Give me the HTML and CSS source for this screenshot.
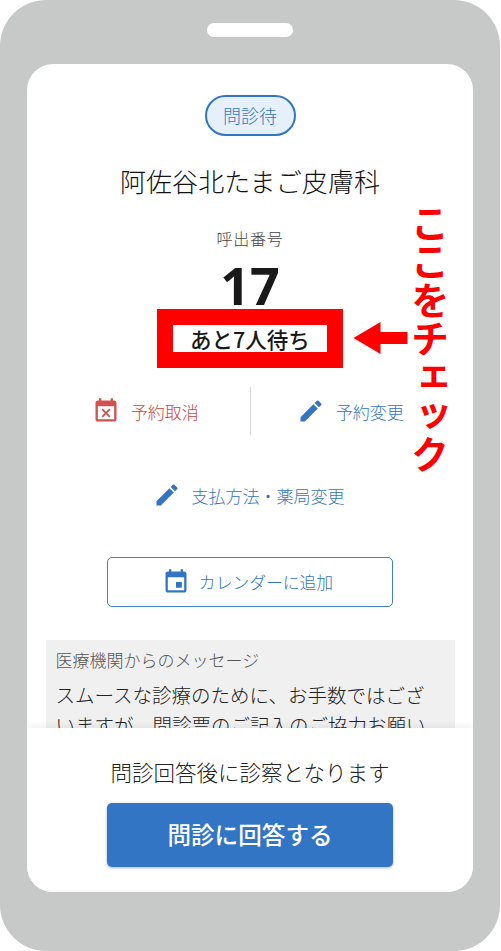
FILE: index.html
```html
<!DOCTYPE html>
<html lang="ja">
<head>
<meta charset="utf-8">
<title>呼出番号</title>
<link rel="stylesheet" href="styles.css">
</head>
<body>
<div class="phone">
  <div class="speaker"></div>
  <main class="screen">
    <div class="content">
      <span class="chip">問診待</span>
      <h1 class="clinic">阿佐谷北たまご皮膚科</h1>
      <p class="num-label">呼出番号</p>
      <p class="num">17</p>
      <div class="actions">
        <a class="action cancel">
          <svg class="icon" viewBox="0 0 24 24"><path d="M19 3h-1V1h-2v2H8V1H6v2H5C3.9 3 3 3.9 3 5v14c0 1.1.9 2 2 2h14c1.1 0 2-.9 2-2V5c0-1.100-.9-2-2-2zm0 16H5V8h14v11zM9.300 17.500l2.700-2.700 2.700 2.700 1.100-1.100-2.700-2.700 2.700-2.700-1.100-1.100-2.700 2.700-2.700-2.700-1.100 1.100 2.700 2.700-2.700 2.700z"/></svg>
          予約取消
        </a>
        <div class="divider"></div>
        <a class="action change">
          <svg class="icon" viewBox="0 0 24 24"><path d="M3 17.250V21h3.750L17.810 9.940l-3.750-3.750L3 17.250zM20.710 7.040a1 1 0 0 0 0-1.410l-2.340-2.340a1 1 0 0 0-1.410 0l-1.830 1.830 3.750 3.750 1.830-1.830z"/></svg>
          予約変更
        </a>
      </div>
      <a class="action pay">
        <svg class="icon" viewBox="0 0 24 24"><path d="M3 17.250V21h3.750L17.810 9.940l-3.750-3.750L3 17.250zM20.710 7.040a1 1 0 0 0 0-1.410l-2.340-2.340a1 1 0 0 0-1.410 0l-1.830 1.830 3.750 3.750 1.830-1.830z"/></svg>
        支払方法・薬局変更
      </a>
      <a class="calendar">
        <svg class="icon" viewBox="0 0 24 24"><path d="M17 12h-5v5h5v-5zM16 1v2H8V1H6v2H5c-1.100 0-2 .9-2 2v14c0 1.100.9 2 2 2h14c1.100 0 2-.9 2-2V5c0-1.100-.9-2-2-2h-1V1h-2zm3 18H5V8h14v11z"/></svg>
        カレンダーに追加
      </a>
      <section class="message">
        <h2 class="message-title">医療機関からのメッセージ</h2>
        <p class="message-body">スムースな診療のために、お手数ではございますが、問診票のご記入のご協力お願いいたします。</p>
      </section>
    </div>
    <footer class="footer">
      <p class="footer-note">問診回答後に診察となります</p>
      <button class="answer" type="button">問診に回答する</button>
    </footer>
  </main>
  <div class="wait-box"><span class="wait-text">あと7人待ち</span></div>
  <svg class="arrow" viewBox="0 0 54 32"><path d="M0 16 27 0v10h27v12H27v10z"/></svg>
  <div class="callout">ここをチェック</div>
</div>
</body>
</html>
```
FILE: styles.css
```css
* { box-sizing: border-box; }
html, body { margin: 0; padding: 0; background: #fff; }
body { font-family: "Noto Sans CJK JP", "Noto Sans", sans-serif; font-weight: 300; }
.phone {
  position: relative;
  width: 500px;
  height: 951px;
  background: #c7c9c8;
  border-radius: 46px;
  padding: 23px 27px 59px;
  display: flex;
  flex-direction: column;
  align-items: center;
}
.speaker { width: 86px; height: 14px; background: #fff; border-radius: 7px; flex: none; }
.screen {
  margin-top: 27px;
  width: 446px;
  flex: 1;
  min-height: 0;
  background: #fff;
  border-radius: 26px;
  overflow: hidden;
  display: flex;
  flex-direction: column;
}
.content {
  flex: 1;
  min-height: 0;
  overflow: hidden;
  display: flex;
  flex-direction: column;
  align-items: center;
  padding-top: 31px;
}
.chip {
  width: 91px;
  height: 41px;
  border: 2px solid #3375c5;
  border-radius: 21px;
  background: #e6f0fa;
  color: #3375c5;
  font-size: 18px;
  line-height: 37px;
  text-align: center;
}
.clinic {
  margin: 25px 0 0;
  font-size: 26px;
  line-height: 40px;
  font-weight: 300;
  letter-spacing: 0.1px;
  color: #111;
}
.num-label { margin: 26px 0 0; font-size: 16px; line-height: 22px; color: #444; letter-spacing: 0.8px; }
.num { margin: 3px 0 0; font-size: 52px; line-height: 66px; font-weight: 700; color: #191919; font-family: "Noto Sans", sans-serif; }
.actions {
  margin-top: 69px;
  width: 100%;
  display: grid;
  grid-template-columns: 1fr 1px 1fr;
  align-items: center;
  height: 48px;
}
.divider { width: 1px; height: 48px; background: #d5d5d5; }
.action { display: flex; align-items: center; justify-content: center; gap: 11px; font-size: 17px; }
.icon { width: 28px; height: 28px; fill: currentColor; flex: none; }
.cancel { color: #d0423e; padding-left: 14px; }
.cancel .icon { color: #d0524e; }
.change { color: #3375c5; padding-right: 23px; }
.change .icon, .pay .icon, .calendar .icon { color: #3375c5; }
.pay { margin-top: 46px; height: 30px; color: #3375c5; gap: 11px; padding-right: 3px; }
.calendar {
  margin-top: 48px;
  width: 286px;
  height: 50px;
  flex: none;
  border: 1px solid #3f80cc;
  border-radius: 5px;
  color: #3375c5;
  font-size: 16.800px;
  display: flex;
  align-items: center;
  justify-content: center;
  gap: 9px;
  padding-right: 5px;
}
.message {
  margin-top: 33px;
  width: 409px;
  flex: none;
  background: #f0f0f0;
  padding: 8px 20px 10px 10px;
}
.message-title { margin: 0; font-size: 17px; line-height: 24px; font-weight: 300; color: #555; }
.message-body { margin: 8px 0 0; font-size: 19.500px; line-height: 30px; color: #222; }
.footer {
  flex: none;
  height: 164px;
  background: #fff;
  box-shadow: 0 -3px 6px rgba(0, 0, 0, 0.05);
  position: relative;
  display: flex;
  flex-direction: column;
  align-items: center;
  padding-top: 28px;
}
.footer-note { margin: 0; font-size: 21.500px; line-height: 32px; color: #222; }
.answer {
  margin-top: 15px;
  width: 286px;
  height: 64px;
  border: 0;
  border-radius: 5px;
  background: #3375c5;
  color: #fff;
  font-family: inherit;
  font-size: 23.600px;
  font-weight: 500;
  line-height: 60px;
  padding: 0 0 2px;
  box-shadow: 0 1px 3px rgba(0, 0, 0, 0.3);
}
.wait-box {
  position: absolute;
  left: 157px;
  top: 309px;
  width: 186px;
  height: 59px;
  border: 16px solid #f00;
  background: #fff;
  display: flex;
  align-items: center;
  justify-content: center;
}
.wait-text { font-size: 21.500px; font-weight: 500; color: #191919; white-space: nowrap; }
.arrow { position: absolute; left: 353px; top: 322px; width: 55px; height: 32px; fill: #f00; }
.callout {
  position: absolute;
  left: 410px;
  top: 204px;
  writing-mode: vertical-rl;
  font-size: 38.500px;
  line-height: 40px;
  font-weight: 700;
  color: #f00;
  white-space: nowrap;
}
```
